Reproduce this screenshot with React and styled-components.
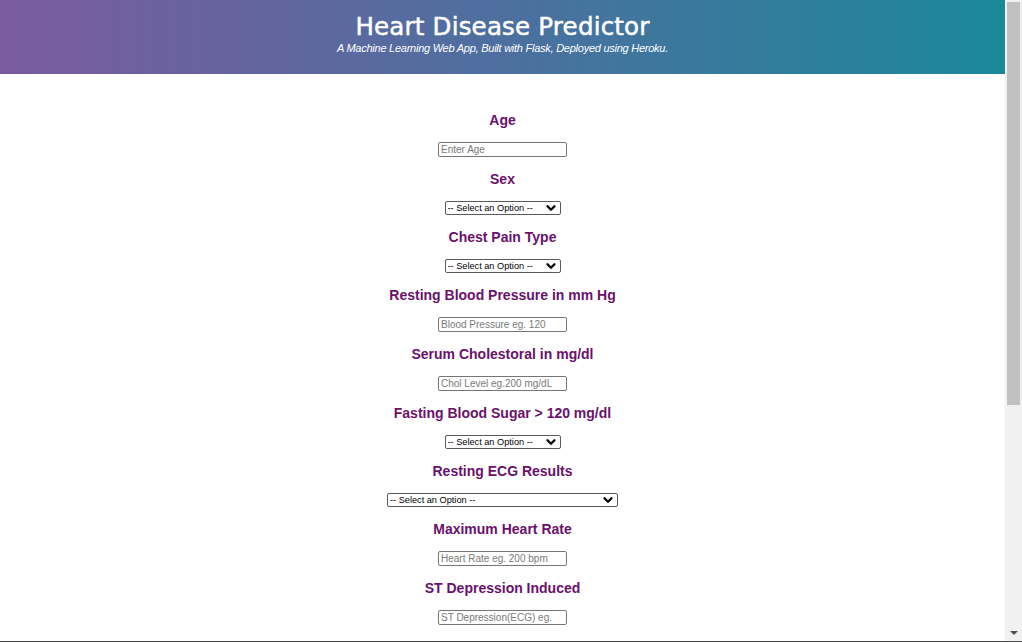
import React from 'react';
import styled, { createGlobalStyle } from 'styled-components';
import { ChevronDown } from 'lucide-react';

const GlobalStyle = createGlobalStyle`
  html, body { margin: 0; padding: 0; height: 100%; overflow: hidden; background: #fff; }
  #root { height: 100%; }
`;

const Screen = styled.div`
  display: flex;
  height: 642px;
  box-sizing: border-box;
  border-bottom: 1px solid #4a4a4a;
  background: #fff;
`;

const Page = styled.main`
  flex: 1;
  min-width: 0;
  overflow: hidden;
`;

const Rail = styled.div`
  width: 17px;
  flex: none;
  display: flex;
  flex-direction: column;
  background: #f1f1f1;
`;

const Thumb = styled.div`
  margin: 2px 2px 0;
  height: 403px;
  background: #c1c1c1;
`;

const RailSpacer = styled.div`
  flex: 1;
`;

const RailButton = styled.div`
  height: 17px;
  display: flex;
  align-items: center;
  justify-content: center;
`;

const DownTriangle = styled.span`
  width: 0;
  height: 0;
  border-left: 4px solid transparent;
  border-right: 4px solid transparent;
  border-top: 4px solid #505050;
`;

const Header = styled.header`
  height: 74px;
  box-sizing: border-box;
  padding-top: 12px;
  background: linear-gradient(to right, #7b5ba0 0%, #4d6fa0 50%, #1a8898 100%);
  display: flex;
  flex-direction: column;
  align-items: center;
  color: #fff;
`;

const Title = styled.h1`
  margin: 0;
  font-family: "DejaVu Sans", sans-serif;
  font-weight: normal;
  font-size: 24.5px;
  line-height: 30px;
  letter-spacing: 0.2px;
  -webkit-text-stroke: 0.5px #fff;
`;

const Subtitle = styled.p`
  margin: 0;
  font-family: "Liberation Sans", Arial, sans-serif;
  font-style: italic;
  font-size: 11px;
  line-height: 13px;
  letter-spacing: -0.25px;
`;

const Form = styled.form`
  display: flex;
  flex-direction: column;
  align-items: center;
  gap: 14px;
  padding: 38px 0 0;
`;

const Field = styled.div`
  display: flex;
  flex-direction: column;
  align-items: center;
  gap: 14px;
`;

const Label = styled.label`
  font-family: "Liberation Sans", Arial, sans-serif;
  font-weight: bold;
  font-size: 14px;
  line-height: 16px;
  color: #6b116b;
`;

const TextInput = styled.input`
  box-sizing: border-box;
  width: 129px;
  height: 15px;
  padding: 0 2px;
  margin: 0;
  border: 1px solid #767676;
  border-radius: 2px;
  font-family: "Liberation Sans", Arial, sans-serif;
  font-size: 10px;
  color: #000;
  background: #fff;
  &::placeholder { color: #7a7a7a; }
  &:focus { outline: none; }
`;

const SelectWrap = styled.span`
  position: relative;
  display: inline-flex;
  width: ${(p) => p.$w}px;
  height: 14px;
`;

const Select = styled.select`
  appearance: none;
  box-sizing: border-box;
  width: 100%;
  height: 14px;
  margin: 0;
  padding: 0 0 0 2px;
  border: 1px solid #5a5a5a;
  border-radius: 2px;
  background: #fff;
  font-family: "Liberation Sans", Arial, sans-serif;
  font-size: 9.2px;
  line-height: 12px;
  color: #000;
`;

const Arrow = styled.span`
  position: absolute;
  right: 3px;
  top: 0;
  height: 14px;
  display: flex;
  align-items: center;
  pointer-events: none;
  color: #000;
`;

const fields = [
  { label: 'Age', kind: 'input', placeholder: 'Enter Age' },
  { label: 'Sex', kind: 'select', w: 116, options: ['Male', 'Female'] },
  { label: 'Chest Pain Type', kind: 'select', w: 116, options: ['Typical Angina', 'Atypical Angina', 'Non-anginal Pain', 'Asymptomatic'] },
  { label: 'Resting Blood Pressure in mm Hg', kind: 'input', placeholder: 'Blood Pressure eg. 120' },
  { label: 'Serum Cholestoral in mg/dl', kind: 'input', placeholder: 'Chol Level eg.200 mg/dL' },
  { label: 'Fasting Blood Sugar > 120 mg/dl', kind: 'select', w: 116, options: ['True', 'False'] },
  { label: 'Resting ECG Results', kind: 'select', w: 231, options: ['Normal', 'Having ST-T wave abnormality', 'Showing probable or definite left ventricular hypertrophy'] },
  { label: 'Maximum Heart Rate', kind: 'input', placeholder: 'Heart Rate eg. 200 bpm' },
  { label: 'ST Depression Induced', kind: 'input', placeholder: 'ST Depression(ECG) eg.' },
];

export default function App() {
  return (
    <>
      <GlobalStyle />
      <Screen>
        <Page>
          <Header>
            <Title>Heart Disease Predictor</Title>
            <Subtitle>A Machine Learning Web App, Built with Flask, Deployed using Heroku.</Subtitle>
          </Header>
          <Form onSubmit={(e) => e.preventDefault()}>
            {fields.map((f) => (
              <Field key={f.label}>
                <Label>{f.label}</Label>
                {f.kind === 'input' ? (
                  <TextInput type="text" placeholder={f.placeholder} />
                ) : (
                  <SelectWrap $w={f.w}>
                    <Select defaultValue="">
                      <option value="" disabled>-- Select an Option --</option>
                      {f.options.map((o) => (
                        <option key={o}>{o}</option>
                      ))}
                    </Select>
                    <Arrow>
                      <ChevronDown size={14} strokeWidth={4} />
                    </Arrow>
                  </SelectWrap>
                )}
              </Field>
            ))}
          </Form>
        </Page>
        <Rail aria-hidden="true">
          <Thumb />
          <RailSpacer />
          <RailButton>
            <DownTriangle />
          </RailButton>
        </Rail>
      </Screen>
    </>
  );
}
